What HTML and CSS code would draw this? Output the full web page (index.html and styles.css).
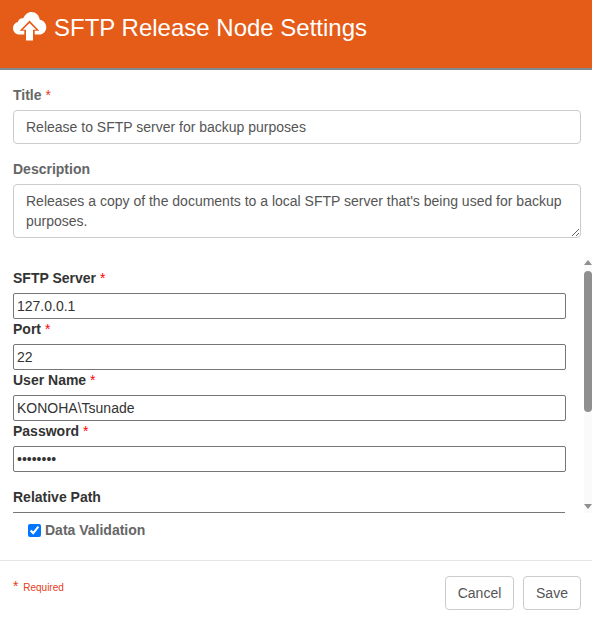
FILE: index.html
```html
<!DOCTYPE html>
<html lang="en">
<head>
<meta charset="utf-8">
<title>SFTP Release Node Settings</title>
<link rel="stylesheet" href="styles.css">
</head>
<body>
<div class="dialog">
  <header class="head">
    <svg class="cloud" viewBox="0 0 34 30" width="34" height="30" aria-hidden="true">
      <path fill="#fff" d="M6.500 22.500C2.800 22.500 0 19.700 0 16.200c0-3 2-5.500 4.900-6.200C5.400 7.400 7.900 5.700 10.300 6.300 11.800 2.600 14.900 0 18.400 0c4.400 0 7.900 3.300 8.300 7.700 3.800.5 6.600 3.800 6.600 7.500 0 4-3.100 7.300-7 7.300z"/>
      <path fill="#e55c19" d="M16.500 8.500l9.800 10.300h-4.600V30h-10.400V18.800H6.700z"/>
      <path fill="#fff" d="M16.500 11l6.700 6.800h-3.200V28.500h-7V17.800H9.800z"/>
    </svg>
    <h1 class="head-title">SFTP Release Node Settings</h1>
  </header>

  <div class="top-form">
    <label class="label muted">Title <span class="req">*</span></label>
    <input class="field" type="text" value="Release to SFTP server for backup purposes">
    <label class="label muted desc-label">Description</label>
    <textarea class="field area">Releases a copy of the documents to a local SFTP server that's being used for backup purposes.</textarea>
  </div>

  <div class="panel">
    <div class="panel-body">
      <label class="label dark">SFTP Server <span class="req bright">*</span></label>
      <input class="plain" type="text" value="127.0.0.1">
      <label class="label dark">Port <span class="req bright">*</span></label>
      <input class="plain" type="text" value="22">
      <label class="label dark">User Name <span class="req bright">*</span></label>
      <input class="plain" type="text" value="KONOHA\Tsunade">
      <label class="label dark">Password <span class="req bright">*</span></label>
      <input class="plain" type="password" value="password">
      <div class="section">Relative Path</div>
    </div>
    <div class="scrollbar">
      <span class="arrow up"></span>
      <span class="thumb"></span>
      <span class="arrow down"></span>
    </div>
  </div>

  <label class="check">
    <input type="checkbox" checked>
    <span>Data Validation</span>
  </label>

  <footer class="foot">
    <div class="required"><span class="star">*</span> Required</div>
    <div class="actions">
      <button class="btn cancel" type="button">Cancel</button>
      <button class="btn save" type="button">Save</button>
    </div>
  </footer>
</div>
</body>
</html>
```
FILE: styles.css
```css
* { box-sizing: border-box; }
html, body { margin: 0; padding: 0; background: #fff; }
body { font-family: "Liberation Sans", Arial, sans-serif; font-size: 14px; color: #555; }
.dialog { width: 592px; height: 621px; overflow: hidden; display: flex; flex-direction: column; }

.head {
  height: 70px; flex: none;
  background: #e55c19;
  border-bottom: 2px solid #7f8a90;
  display: flex; align-items: flex-start;
  padding: 11px 0 0 13px; gap: 7px;
}
.cloud { flex: none; margin-top: 1px; }
.head-title { margin: 0; font-size: 24px; line-height: 34px; font-weight: 400; color: #fff; }

.top-form { padding: 17px 11px 0 13px; display: flex; flex-direction: column; flex: none; height: 187px; }
.label { display: block; font-size: 14px; line-height: 16px; font-weight: 700; }
.muted { color: #666; }
.dark { color: #333; padding-top: 2px; margin-bottom: 7px; }
.req { color: #e5401a; font-weight: 400; }
.bright { color: #f00; }
.field {
  display: block; width: 100%; margin: 7px 0 0;
  border: 1px solid #ccc; border-radius: 4px;
  padding: 0 12px; height: 34px;
  font: 14px/20px "Liberation Sans", Arial, sans-serif; color: #555;
  background: #fff; outline: none;
}
.desc-label { margin-top: 17px; }
.area { height: 54px; padding: 6px 12px; resize: vertical; overflow: hidden; margin-top: 7px; }

.panel { height: 256px; flex: none; display: flex; justify-content: space-between; }
.panel-body { width: 552px; margin-left: 13px; padding-top: 11px; border-bottom: 1px solid #767676; }
.plain {
  display: block; width: 553px; height: 26px; margin: 0;
  border: 1px solid #767676; border-radius: 2px;
  padding: 1px 3px;
  font: 14px "Liberation Sans", Arial, sans-serif; color: #333; background: #fff; outline: none;
}
.section { margin-top: 17px; font-size: 14px; line-height: 16px; font-weight: 700; color: #333; }

.scrollbar { width: 8px; background: #fafafa; display: flex; flex-direction: column; align-items: center; }
.arrow { flex: none; width: 0; height: 0; border-left: 4px solid transparent; border-right: 4px solid transparent; }
.up { border-bottom: 5px solid #8f8f8f; margin-top: 3px; margin-bottom: 6px; }
.thumb { flex: none; width: 8px; height: 141px; background: #8f8f8f; border-radius: 4px; }
.down { border-top: 5px solid #8f8f8f; margin-top: auto; margin-bottom: 4px; }

.check { display: flex; align-items: center; padding-left: 28px; height: 34px; flex: none; font-weight: 700; color: #666; }
.check input { width: 13px; height: 13px; margin: 0 4px 0 0; accent-color: #0075ff; }

.foot { border-top: 1px solid #e5e5e5; flex: 1; margin-top: 13px; display: flex; justify-content: space-between; padding: 15px 11px 0 13px; }
.required { font-size: 10px; line-height: 16px; color: #e5401a; padding-top: 2px; }
.star { font-size: 14px; margin-right: 2px; }
.actions { display: flex; gap: 9px; }
.btn {
  height: 34px; border: 1px solid #ccc; border-radius: 4px; background: #fff;
  font: 14px "Liberation Sans", Arial, sans-serif; color: #555; padding: 0;
}
.cancel { width: 69px; }
.save { width: 58px; }
```
